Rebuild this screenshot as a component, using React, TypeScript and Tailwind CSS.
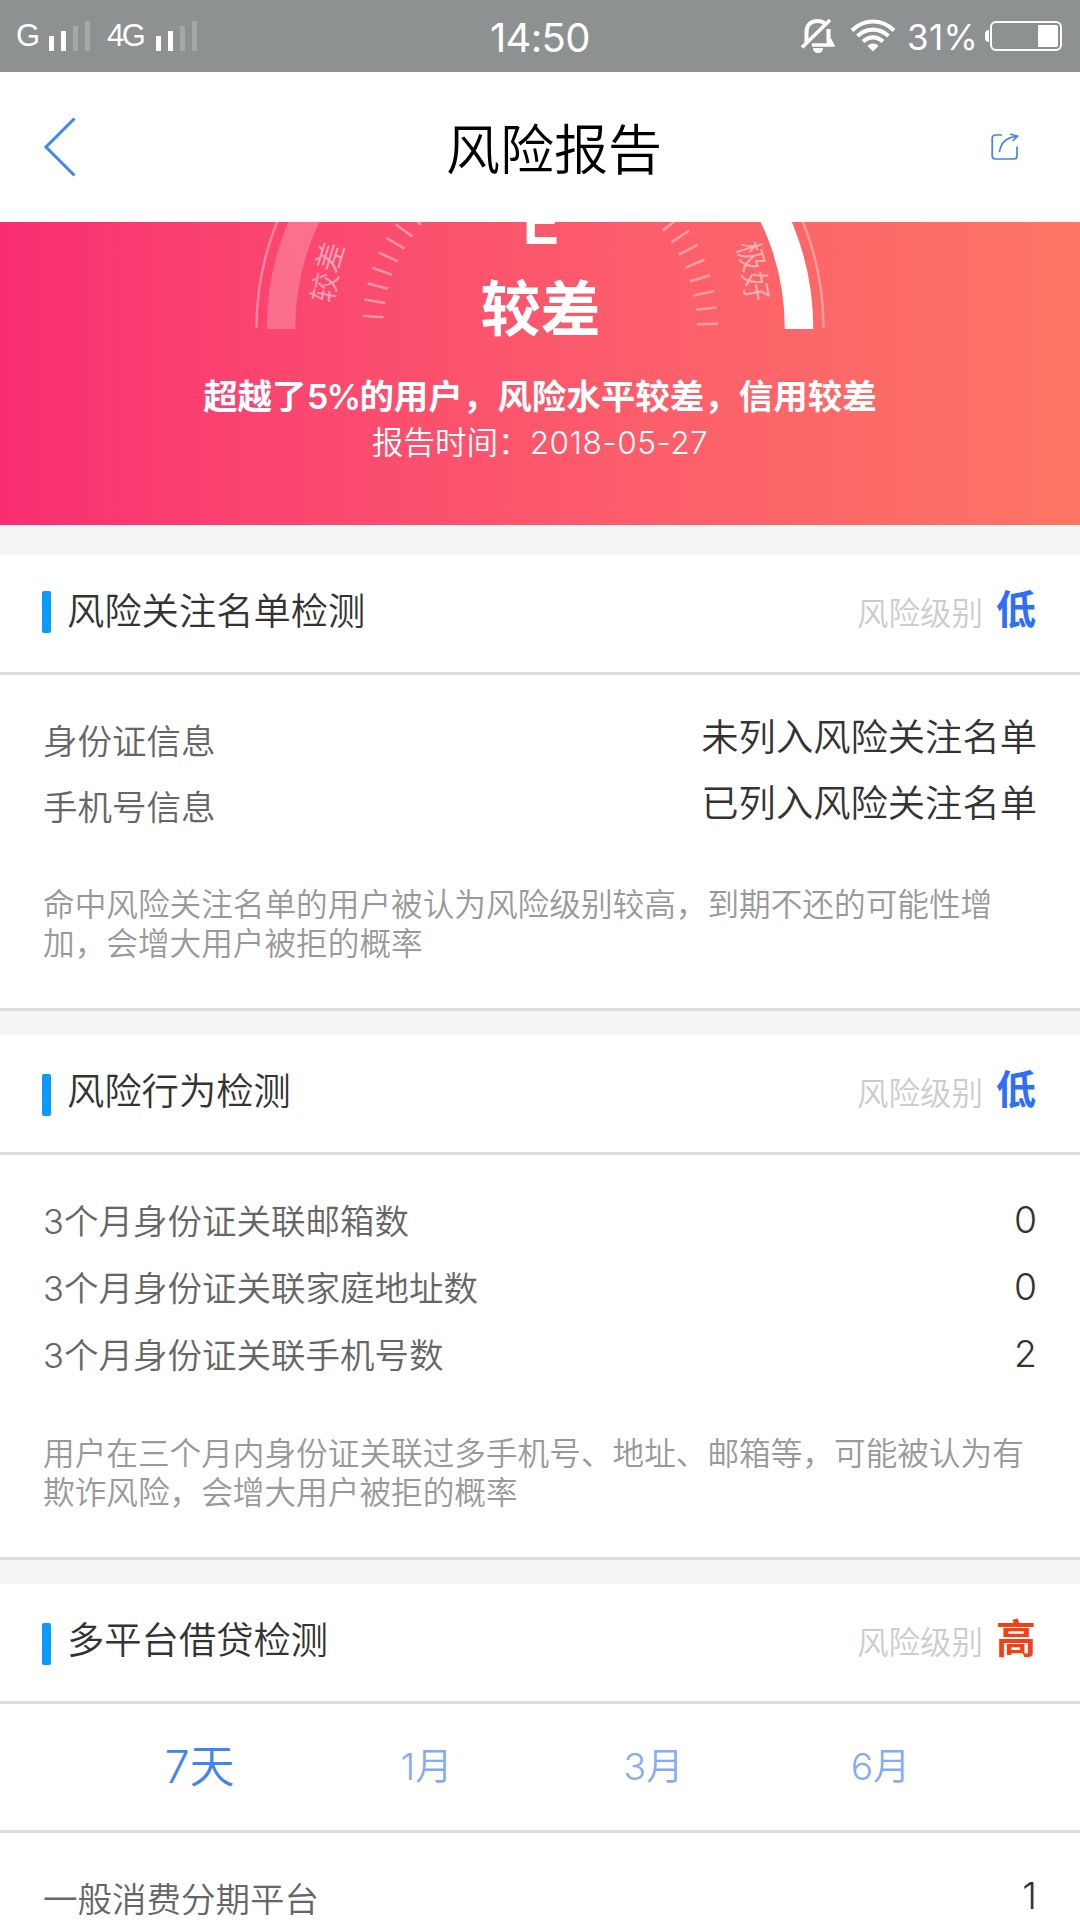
import type { ReactNode } from "react";
import { clsx } from "clsx";

type Level = "low" | "high";

interface Item {
  label: string;
  value: string;
}

const levels: Record<Level, { text: string; className: string }> = {
  low: { text: "低", className: "text-[#2f6ff5]" },
  high: { text: "高", className: "text-[#f24112]" },
};

const watchList: Item[] = [
  { label: "身份证信息", value: "未列入风险关注名单" },
  { label: "手机号信息", value: "已列入风险关注名单" },
];

const behaviours: Item[] = [
  { label: "3个月身份证关联邮箱数", value: "0" },
  { label: "3个月身份证关联家庭地址数", value: "0" },
  { label: "3个月身份证关联手机号数", value: "2" },
];

const tabs = ["7天", "1月", "3月", "6月"];

function Signal() {
  return (
    <div className="flex items-end gap-[7px]">
      <span className="h-[15px] w-[5px] bg-white" />
      <span className="h-5 w-[5px] bg-white" />
      <span className="h-[25px] w-[5px] bg-[#a6a7a8]" />
      <span className="h-[30px] w-[5px] bg-[#a6a7a8]" />
    </div>
  );
}

function StatusBar() {
  return (
    <div className="relative flex h-18 items-center justify-between bg-[#8d9191] pr-[18px] pl-[17px] text-white">
      <div className="flex items-center">
        <span className="-ml-px w-[33px] font-['Liberation_Sans'] text-[31px] leading-9 tracking-[-2px]">G</span>
        <Signal />
        <span className="ml-[17px] w-[49px] font-['Liberation_Sans'] text-[31px] leading-9 tracking-[-2.5px]">4G</span>
        <Signal />
      </div>
      <span className="absolute left-[490px] top-[14px] text-[40px] leading-[48px] tracking-[-0.7px]">14:50</span>
      <div className="flex items-center">
        {/* Muted bell */}
        <svg className="h-[36px] w-[36px]" viewBox="0 0 36 36" fill="none" stroke="#fff">
          <path d="M5.500 25V14C5.500 6.500 10 3 17 3C20 3 22 3.800 24 5.500" strokeWidth="4" />
          <path d="M27.500 11V26" strokeWidth="4" />
          <path d="M11 27H31.500L28.500 21" strokeWidth="3.500" />
          <path d="M1 29.500L29 2" strokeWidth="3.500" />
          <path d="M12 30H22C22 33 20 35 17 35S12 33 12 30Z" fill="#fff" stroke="none" />
        </svg>
        <svg className="ml-[13px] h-[34px] w-[46px]" viewBox="0 0 46 34" fill="none" stroke="#fff" strokeWidth="4.200">
          <path d="M2 11.500C14 -0.500 32 -0.500 44 11.500" />
          <path d="M7.500 17C16.500 8.500 29.500 8.500 38.500 17" />
          <path d="M13 22.500C19 17 27 17 33 22.500" />
          <path d="M17.500 27C21 23.800 25 23.800 28.500 27L23 32.500Z" fill="#fff" stroke="none" />
        </svg>
        <span className="ml-[11px] w-[68px] pt-[2px] text-[35px] leading-10 tracking-[0.3px]">31%</span>
        <span className="ml-[10px] h-3 w-1 rounded-l-full bg-white" />
        <span className="ml-px flex h-[30px] w-[72px] items-center justify-end rounded-[6px] border-2 border-white pr-0.5">
          <span className="h-[22px] w-5 rounded-r-[2px] bg-white" />
        </span>
      </div>
    </div>
  );
}

function TitleBar() {
  return (
    <header className="relative flex h-[150px] items-center justify-between bg-white pr-[61px] pb-px pl-[43px]">
      <svg className="h-[60px] w-[34px]" viewBox="0 0 34 60" fill="none" stroke="#3f87ee" strokeWidth="3">
        <path d="M31.500 1.500L3 30L31.500 58.500" />
      </svg>
      <h1 className="absolute inset-x-0 top-[46px] pl-[28px] text-center text-[54px] leading-[66px] font-[350] text-black">
        风险报告
      </h1>
      <svg className="h-7 w-7" viewBox="0 0 28 28" fill="none" stroke="#3f87ee" strokeWidth="1.700">
        <path d="M11 2H4.500C2.500 2 1.200 3.300 1.200 5V23C1.200 25 2.500 26 4.500 26H23C25 26 26 25 26 23V13.500" />
        <path d="M8.500 19C9.500 10.500 15 4.500 25.500 3.300M19 1L26.500 3.200L21.500 8" />
      </svg>
    </header>
  );
}

// Ticks sit on a circle around (540, 106), evenly spread over the half turn
const ticks = Array.from({ length: 34 }, (_, i) => {
  const angle = ((1.36 + i * 5.295) * Math.PI) / 180;
  return {
    x1: 540 + 157 * Math.cos(angle),
    y1: 106 - 157 * Math.sin(angle),
    x2: 540 + 178 * Math.cos(angle),
    y2: 106 - 178 * Math.sin(angle),
  };
});

function Gauge() {
  return (
    <svg className="absolute inset-x-0 top-0 h-[303px] w-[1080px]" viewBox="0 0 1080 303" fill="none">
      <g stroke="#fff">
        <path d="M256.500 106A283.500 283.500 0 0 1 823.500 106" strokeWidth="2.500" strokeOpacity="0.350" />
        <path d="M281 107A259 259 0 0 1 540 -153" strokeWidth="28.500" strokeOpacity="0.220" />
        <path d="M540 -153A259 259 0 0 1 799 107" strokeWidth="28.500" />
      </g>
      <g stroke="#fff" strokeOpacity="0.400" strokeWidth="2.500">
        {ticks.map((tick, i) => (
          <line key={i} {...tick} />
        ))}
      </g>
      <g className="font-[350]" fill="#fff" fillOpacity="0.500" fontSize="30" textAnchor="middle">
        <text transform="translate(324.500 65.500) rotate(-79)" y="11">较</text>
        <text transform="translate(330 35) rotate(-73)" y="11">差</text>
        <text transform="translate(751.500 34) rotate(73)" y="11">极</text>
        <text transform="translate(756 64.500) rotate(79)" y="11">好</text>
      </g>
    </svg>
  );
}

function Hero() {
  return (
    <section className="relative h-[303px] overflow-hidden bg-linear-to-r from-[#f92d72] to-[#fd7564] text-center text-white">
      <Gauge />
      <div className="relative -mt-[38px]">
        <p className="pl-0.5 text-[63px] leading-[75px] font-semibold">E</p>
        <p className="mt-[15px] pl-px text-[60px] leading-[70px] font-bold">较差</p>
        <p className="mt-[31px] text-[34.5px] leading-[44px] font-bold">
          超越了<span className="font-semibold tracking-[-1.8px]">5%</span>的用户，风险水平较差，信用较差
        </p>
        <p className="mt-0.5 text-[31.6px] leading-[44px] font-[350]">
          报告时间：<span className="tracking-[0.5px]">2018-05-27</span>
        </p>
      </div>
    </section>
  );
}

function Section({
  title,
  level,
  first,
  last,
  children,
}: {
  title: string;
  level: Level;
  first?: boolean;
  last?: boolean;
  children: ReactNode;
}) {
  const { text, className } = levels[level];

  return (
    <section className={clsx("bg-white", !last && "border-b-3 border-[#dcdcdc]")}>
      <div className="flex h-[120px] items-center justify-between border-b-3 border-[#dcdcdc] pr-[44px] pl-[42px]">
        <div className="flex items-center">
          <span className={clsx("h-[42px] w-[9px] rounded-[2px] bg-[#0a9bff]", first ? "-mt-[3px]" : "mt-[3px]")} />
          <h2 className="ml-4 pb-[3px] text-[37.3px] leading-[48px] font-[350] text-[#333]">{title}</h2>
        </div>
        <div className="flex items-center gap-[13px]">
          <span className="text-[31.5px] leading-10 font-[350] text-[#ccc]">风险级别</span>
          <span className={clsx("pb-[7px] text-[40px] leading-[48px] font-bold", className)}>{text}</span>
        </div>
      </div>
      {children}
    </section>
  );
}

function Rows({ items, raised, roomy }: { items: Item[]; raised?: boolean; roomy?: boolean }) {
  return (
    <dl className="pt-[33px] pr-[43px] pl-[43px]">
      {items.map((item) => (
        <div
          key={item.label}
          className={clsx("flex items-center justify-between font-[350]", roomy ? "h-[67px]" : "h-[66px]")}
        >
          <dt className={clsx("text-[34.5px] leading-[48px] text-[#666]", !roomy && "pt-0.5")}>{item.label}</dt>
          <dd className={clsx("text-[37.3px] leading-[48px] text-[#333]", raised ? "pb-1.5" : "pb-[3px]")}>
            {item.value}
          </dd>
        </div>
      ))}
    </dl>
  );
}

function Note({ children }: { children: ReactNode }) {
  return (
    <p className="mr-[40px] ml-[43px] pt-[45px] pb-[45px] text-[31.65px] leading-[39px] font-[350] text-[#999]">
      {children}
    </p>
  );
}

export default function App() {
  return (
    <div className="h-[1920px] w-[1080px] overflow-hidden bg-[#f3f5f7] font-[Inter,'Noto_Sans_CJK_SC',sans-serif]">
      <StatusBar />
      <TitleBar />
      <Hero />

      <main className="mt-[30px] flex flex-col gap-6">
        <Section title="风险关注名单检测" level="low" first>
          <Rows items={watchList} raised />
          <Note>
            命中风险关注名单的用户被认为风险级别较高，到期不还的可能性增
            <br />
            加，会增大用户被拒的概率
          </Note>
        </Section>

        <Section title="风险行为检测" level="low">
          <Rows items={behaviours} roomy />
          <Note>
            用户在三个月内身份证关联过多手机号、地址、邮箱等，可能被认为有
            <br />
            欺诈风险，会增大用户被拒的概率
          </Note>
        </Section>

        <Section title="多平台借贷检测" level="high" last>
          <nav className="grid h-[129px] grid-cols-4 items-center border-b-3 border-[#dcdcdc] px-[86px] text-center font-[350]">
            {tabs.map((tab, i) => (
              <button
                key={tab}
                className={clsx(
                  "leading-[54px]",
                  i === 0 ? "text-[45px] text-[#3f87ee]" : "text-[37.3px] text-[#86abf3]"
                )}
              >
                {tab}
              </button>
            ))}
          </nav>
          <Rows items={[{ label: "一般消费分期平台", value: "1" }]} raised />
        </Section>
      </main>
    </div>
  );
}
